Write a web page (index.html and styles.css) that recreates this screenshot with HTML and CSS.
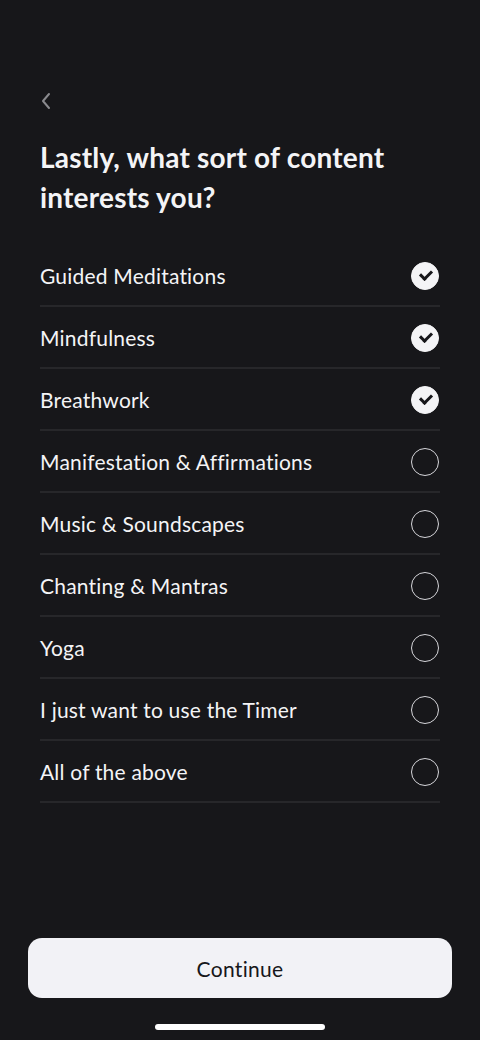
FILE: index.html
```html
<!DOCTYPE html>
<html lang="en">
<head>
  <meta charset="UTF-8">
  <meta name="viewport" content="width=device-width, initial-scale=1.0">
  <title>Content interests</title>
  <link rel="stylesheet" href="styles.css">
</head>
<body>
  <div class="screen">
    <!-- Back -->
    <button class="back" aria-label="Back">
      <svg width="12" height="18" viewBox="0 0 12 18"><path d="M9 2 L3 9 L9 16" fill="none" stroke="#8a8a8e" stroke-width="2" stroke-linecap="round" stroke-linejoin="round"/></svg>
    </button>

    <h1>Lastly, what sort of content interests you?</h1>

    <ul class="options">
      <li class="option checked">Guided Meditations <span class="tick"></span></li>
      <li class="option checked">Mindfulness <span class="tick"></span></li>
      <li class="option checked">Breathwork <span class="tick"></span></li>
      <li class="option">Manifestation &amp; Affirmations <span class="tick"></span></li>
      <li class="option">Music &amp; Soundscapes <span class="tick"></span></li>
      <li class="option">Chanting &amp; Mantras <span class="tick"></span></li>
      <li class="option">Yoga <span class="tick"></span></li>
      <li class="option">I just want to use the Timer <span class="tick"></span></li>
      <li class="option">All of the above <span class="tick"></span></li>
    </ul>

    <div class="footer">
      <button class="continue">Continue</button>
      <div class="home-bar"></div>
    </div>
  </div>
</body>
</html>
```

FILE: styles.css
```css
body {
  margin: 0;
  padding: 0;
  background: #17171a;
  font-family: 'Lato', sans-serif;
  color: #f4f4f6;
}

.screen {
  height: 1040px;
  display: flex;
  flex-direction: column;
  padding: 0 40px;
  box-sizing: border-box;
}

.back {
  margin-top: 92px;
  width: 12px;
  height: 18px;
  padding: 0;
  border: none;
  background: none;
  display: flex;
}

h1 {
  margin: 27px 0 0;
  font-size: 28px;
  line-height: 40px;
  font-weight: 700;
  letter-spacing: 0.2px;
}

.options {
  list-style: none;
  margin: 28px 0 0;
  padding: 0;
}

.option {
  height: 62px;
  box-sizing: border-box;
  border-bottom: 2px solid #27272a;
  display: flex;
  align-items: center;
  justify-content: space-between;
  font-size: 21px;
  letter-spacing: 0.2px;
  padding-top: 1px;
}

/* Círculo de selección */
.tick {
  width: 28px;
  height: 28px;
  box-sizing: border-box;
  border-radius: 50%;
  border: 1.5px solid #d6d6da;
  margin-right: 1px;
  position: relative;
}

.checked .tick {
  background: #f4f4f6;
  border-color: #f4f4f6;
}

.checked .tick::after {
  content: '';
  position: absolute;
  left: 8px;
  top: 7px;
  width: 9px;
  height: 5px;
  border-left: 3px solid #17171a;
  border-bottom: 3px solid #17171a;
  transform: rotate(-45deg);
}

.footer {
  margin-top: auto;
  display: flex;
  flex-direction: column;
  align-items: center;
}

.continue {
  width: 424px;
  height: 60px;
  border: none;
  border-radius: 14px;
  background: #f2f2f6;
  color: #17171a;
  font-family: 'Lato', sans-serif;
  font-size: 21px;
  letter-spacing: 0.3px;
  cursor: pointer;
}

.home-bar {
  width: 170px;
  height: 6px;
  border-radius: 3px;
  background: #fff;
  margin: 26px 0 10px;
}
```
